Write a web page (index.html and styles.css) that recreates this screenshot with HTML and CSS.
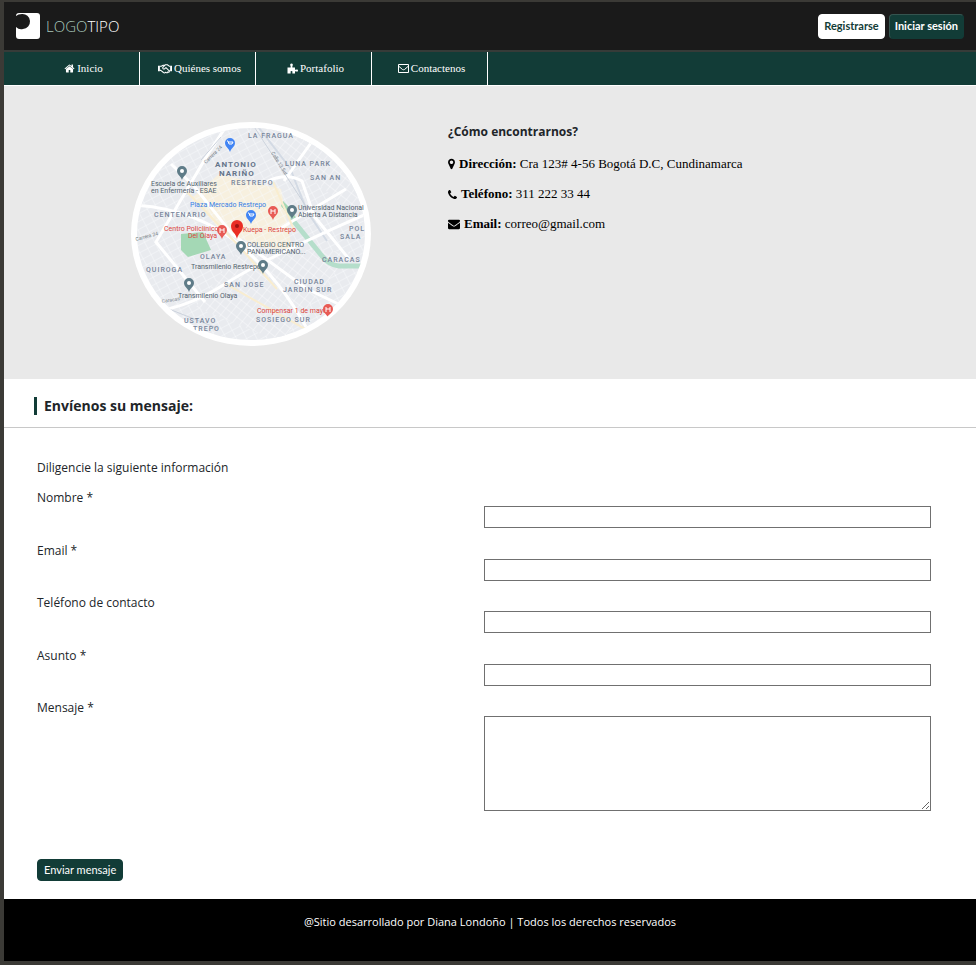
FILE: index.html
```html
<!DOCTYPE html>
<html lang="es">
<head>
<meta charset="utf-8">
<meta name="viewport" content="width=device-width, initial-scale=1">
<title>Contáctenos</title>
<link rel="stylesheet" href="styles.css">
</head>
<body>
<header class="topbar">
  <a class="brand" href="#">
    <svg class="brand-mark" viewBox="0 0 24 26" aria-hidden="true"><rect width="24" height="26" rx="3" fill="#fff"/><path fill="#1a1a1a" d="M0 3Q2 1 6 1A7 7 0 0 1 7 16Q3 17 0 14Z"/></svg>
    <span class="brand-name"><span class="brand-soft">LOGO</span>TIPO</span>
  </a>
  <div class="account">
    <button class="btn btn-light" type="button">Registrarse</button>
    <button class="btn btn-bold" type="button">Iniciar sesión</button>
  </div>
</header>
<nav class="menu">
  <a href="#"><svg class="icon" viewBox="0 0 1792 1792" aria-hidden="true"><path d="M1472 992v480q0 26-19 45t-45 19h-384v-384h-256v384h-384q-26 0-45-19t-19-45v-480q0-1 .5-3t.5-3l575-474 575 474q1 2 1 6zm223-69l-62 74q-8 9-21 11h-3q-13 0-21-7l-692-577-692 577q-12 8-24 7-13-2-21-11l-62-74q-8-10-7-23.500t11-21.500l719-599q32-26 76-26t76 26l244 204v-195q0-14 9-23t23-9h192q14 0 23 9t9 23v408l219 182q10 8 11 21.500t-7 23.500z"/></svg>Inicio</a>
  <a href="#"><svg class="icon icon-wide" viewBox="0 0 30 22" aria-hidden="true"><path d="M0 5h4v12H0zM26 5h4v12h-4z"/><path fill="none" stroke="currentColor" stroke-width="2.200" stroke-linejoin="round" d="M4 6h3l4-2h4l-5 5q0 4 4 3l3-3 7 7q1 3-2 3l-1-1q0 3-3 2l-2-1q-2 3-5 0l-5-4H4M13 5l3-2h4l4 3h2M24 16h2"/></svg>Quiénes somos</a>
  <a href="#"><svg class="icon" viewBox="0 0 22 22" aria-hidden="true"><path d="M1 9h6q1-1 0-3-2-5 2-5t2 5q-1 2 0 3h5v4q1 1 3 0 3-1 3 2t-3 2q-2-1-3 0v4h-5q-1-1 0-3 0-2-2-2t-2 2q1 2 0 3H1z"/></svg>Portafolio</a>
  <a href="#"><svg class="icon" viewBox="0 0 22 22" aria-hidden="true"><path fill="none" stroke="currentColor" stroke-width="2" stroke-linejoin="round" d="M1 3h20v16H1zM1 6l8 7q2 1 4 0l8-7"/></svg>Contactenos</a>
</nav>
<main>
  <section class="contact">
    <div class="map-cell">
      <svg class="map" viewBox="0 0 240 224" role="img" aria-label="Mapa de ubicación">
        <defs>
          <clipPath id="oval"><ellipse cx="120" cy="112" rx="117" ry="109"/></clipPath>
          <clipPath id="land"><ellipse cx="120" cy="112" rx="114" ry="106"/></clipPath>
          <pattern id="blocks" width="9" height="7" patternUnits="userSpaceOnUse" patternTransform="rotate(-28)"><path d="M0 0H9M0 0V7" stroke="#f8f9fb" stroke-width="1" fill="none"/></pattern>
          <pattern id="blocks-b" width="7" height="8" patternUnits="userSpaceOnUse" patternTransform="rotate(38)"><path d="M0 0H7M0 0V8" stroke="#f9fafb" stroke-width="1" fill="none"/></pattern>
          <g id="pin"><path d="M0 7C-1 3-5 2-5-2a5 5 0 0 1 10 0C5 2 1 3 0 7Z"/><circle cy="-2" r="2" fill="#fff"/></g>
          <g id="hospital"><path d="M0 7C-1 3-5 2-5-2a5 5 0 0 1 10 0C5 2 1 3 0 7Z"/><path d="M-2-4V1M2-4V1M-2-2H2" stroke="#fff" stroke-width="1" fill="none"/></g>
          <g id="shop"><path d="M0 7C-1 3-5 2-5-2a5 5 0 0 1 10 0C5 2 1 3 0 7Z"/><path d="M-3-4h1l1 3h3l1-2h-4" stroke="#fff" stroke-width="1" fill="none"/></g>
        </defs>
        <ellipse cx="120" cy="112" rx="120" ry="112" fill="#fff"/>
        <g clip-path="url(#land)">
          <rect width="240" height="224" fill="#e9ebef"/>
          <path d="M88 52l62 15 12 65-31-7-43-18-26-32z" fill="#f7f0df"/>
          <rect width="240" height="224" fill="url(#blocks)"/>
          <path d="M110 0L240 105V0zM110 125l110 5-70 90-85-35z" fill="#e9ebef"/>
          <path d="M110 0L240 105V0zM110 125l110 5-70 90-85-35z" fill="url(#blocks-b)"/>
          <path d="M50 112l22-2 8 18-23 7-7-7zM152 79l6 6 8 12-6-1-10-12z" fill="#a4d8b5"/>
          <path d="M160 96l31 38q7 9 17 10h32" stroke="#b5decb" stroke-width="5" fill="none"/>
          <path d="M125 2l34 44 17 43 20 30" stroke="#d3dae4" stroke-width="2" fill="none"/>
          <g fill="none" stroke="#fff" stroke-width="3"><path d="M0 83q65 3 110 41t75 100M98 0L77 32 25 120 74 180M10 190q40 0 84-28t146-72M135 60q20-10 36-1l12 35 35 43M40 42l23 22 38 48 75 55 42 20M182 18l-29 41M215 67l-70 42"/></g>
          <g fill="none" stroke="#f9edcf" stroke-width="2"><path d="M56 70l50 52 40 45M142 60l22 50M95 162l95 54"/></g>
          <g fill="none" stroke="#cbd2dc" stroke-width="1"><path d="M120 0l56 86M20 180l66 26M90 15L70 38"/></g>
        </g>
        <g clip-path="url(#oval)">
          <g class="map-area">
            <text x="117" y="16">LA FRAGUA</text><text x="154" y="44">LUNA PARK</text><text x="179" y="58">SAN AN</text>
            <text x="100" y="63">RESTREPO</text><text x="23" y="95">CENTENARIO</text><text x="69" y="137">OLAYA</text>
            <text x="15" y="150">QUIROGA</text><text x="93" y="165">SAN JOSE</text><text x="163" y="162">CIUDAD</text>
            <text x="152" y="170">JARDIN SUR</text><text x="125" y="200">SOSIEGO SUR</text><text x="191" y="140">CARACAS</text>
            <text x="218" y="109">POL</text><text x="209" y="117">SALA</text><text x="53" y="201">USTAVO</text><text x="62" y="209">TREPO</text>
          </g>
          <g class="map-district"><text x="84" y="45">ANTONIO</text><text x="88" y="54">NARIÑO</text></g>
          <g class="map-place">
            <text x="20" y="64">Escuela de Auxiliares</text><text x="20" y="71">en Enfermería - ESAE</text>
            <text x="167" y="88">Universidad Nacional</text><text x="167" y="95">Abierta A Distancia</text>
            <text x="116" y="125">COLEGIO CENTRO</text><text x="116" y="132">PANAMERICANO...</text>
            <text x="60" y="147">Transmilenio Restrepo</text><text x="47" y="176">Transmilenio Olaya</text>
          </g>
          <g class="map-blue"><text x="59" y="85">Plaza Mercado Restrepo</text></g>
          <g class="map-red"><text x="33" y="109">Centro Policlínico</text><text x="57" y="116">Del Olaya</text><text x="112" y="110">Kuepa - Restrepo</text><text x="126" y="191">Compensar 1 de mayo</text></g>
          <g class="map-road"><text transform="translate(75 42) rotate(-45)">Carrera 24</text><text transform="translate(140 31) rotate(58)">Calle 13 Sur</text><text transform="translate(5 119) rotate(-15)">Carrera 24</text><text transform="translate(31 181) rotate(-9)">Caracas</text></g>
          <g fill="#5f7c88"><use href="#pin" x="51" y="51"/><use href="#pin" x="161" y="90"/><use href="#pin" x="110" y="126"/><use href="#pin" x="132" y="145"/><use href="#pin" x="58" y="163"/></g>
          <g fill="#4285f4"><use href="#shop" x="99" y="23"/><use href="#shop" x="120" y="95"/></g>
          <g fill="#e85b55"><use href="#hospital" x="142" y="91"/><use href="#hospital" x="91" y="110"/><use href="#hospital" x="197" y="189"/></g>
          <path d="M106 117c-1-6-6-7-6-13a6 6 0 0 1 12 0c0 6-5 7-6 13z" fill="#ea2e25"/><circle cx="106" cy="104" r="2" fill="#9e1411"/>
        </g>
      </svg>
    </div>
    <address class="details">
      <h2>¿Cómo encontrarnos?</h2>
      <p><svg class="icon icon-pin" viewBox="384 0 1024 1792" aria-hidden="true"><path d="M1152 640q0-106-75-181t-181-75-181 75-75 181 75 181 181 75 181-75 75-181zm256 0q0 109-33 179l-364 774q-16 33-47.500 52t-67.500 19-67.500-19-46.500-52l-365-774q-33-70-33-179 0-212 150-362t362-150 362 150 150 362z"/></svg><span><b>Dirección:</b> Cra 123# 4-56 Bogotá D.C, Cundinamarca</span></p>
      <p><svg class="icon icon-phone" viewBox="192 128 1408 1408" aria-hidden="true"><path d="M1600 1240q0 27-10 70.500t-21 68.500q-21 50-122 106-94 51-186 51-27 0-53-3.500t-57.500-12.500-47-14.500-55.500-20.500-49-18q-98-35-175-83-127-79-264-216t-216-264q-48-77-83-175-3-9-18-49t-20.500-55.500-14.500-47-12.500-57.500-3.500-53q0-92 51-186 56-101 106-122 25-11 68.500-21t70.500-10q14 0 21 3 18 6 53 76 11 19 30 54t35 63.500 31 53.500q3 4 17.500 25t21.500 35.500 7 28.500q0 20-28.500 50t-62 55-62 53-28.500 46q0 9 5 22.500t8.500 20.500 14 24 11.500 19q76 137 174 235t235 174q2 1 19 11.500t24 14 20.500 8.500 22.500 5q18 0 46-28.500t53-62 55-62 50-28.500q14 0 28.500 7t35.500 21.500 25 17.500q25 15 53.500 31t63.500 35 54 30q70 35 76 53 3 7 3 21z"/></svg><span><b>Teléfono:</b> 311 222 33 44</span></p>
      <p><svg class="icon icon-mail" viewBox="0 0 1792 1792" aria-hidden="true"><path d="M1792 710v794q0 66-47 113t-113 47h-1472q-66 0-113-47t-47-113v-794q44 49 101 87 362 246 497 345 57 42 92.500 65.500t94.500 48 110 24.500h2q51 0 110-24.500t94.500-48 92.500-65.500q170-123 498-345 57-39 100-87zm0-294q0 79-49 151t-122 123q-376 261-468 325-10 7-42.500 31t-54 38.500-52 32.500-57.500 27-50 9h-2q-23 0-50-9t-57.500-27-52-32.500-54-38.500-42.500-31q-91-64-262-182.500t-205-142.500q-62-42-117-115.500t-55-136.500q0-78 41.500-130t118.500-52h1472q65 0 112.500 47t47.500 113z"/></svg><span><b>Email:</b> correo@gmail.com</span></p>
    </address>
  </section>
  <div class="section-head"><h1>Envíenos su mensaje:</h1></div>
  <form class="message">
    <p class="intro">Diligencie la siguiente información</p>
    <div class="fields">
      <div class="field"><label for="nombre">Nombre *</label><input id="nombre" type="text"></div>
      <div class="field"><label for="email">Email *</label><input id="email" type="email"></div>
      <div class="field"><label for="telefono">Teléfono de contacto</label><input id="telefono" type="tel"></div>
      <div class="field"><label for="asunto">Asunto *</label><input id="asunto" type="text"></div>
    </div>
    <div class="field"><label for="mensaje">Mensaje *</label><textarea id="mensaje"></textarea></div>
    <button class="btn btn-send" type="button">Enviar mensaje</button>
  </form>
</main>
<footer class="foot">@Sitio desarrollado por Diana Londoño | Todos los derechos reservados</footer>
</body>
</html>
```
FILE: styles.css
```css
* { box-sizing: border-box; }
html { background: #3b3a36; }
body {
  margin: 0;
  padding: 2px 0 4px 4px;
  font: 12px/20px "Open Sans", "Noto Sans", sans-serif;
  color: #212529;
}
h1, h2, p { margin: 0; }
a { color: inherit; text-decoration: none; }

.topbar {
  display: flex;
  align-items: center;
  justify-content: space-between;
  height: 50px;
  padding: 0 12px;
  background: #1a1a1a;
  border-bottom: 2px solid #363b38;
}
.brand { display: flex; align-items: center; gap: 6px; color: #fff; }
.brand-mark { width: 24px; height: 26px; }
.brand-name { font-size: 15px; font-weight: 300; }
.brand-soft { color: #a9c8bb; }
.account { display: flex; gap: 4px; }

.btn {
  height: 25px;
  padding: 0 5px;
  border: 1px solid #123c37;
  border-radius: 4px;
  background: #123c37;
  color: #fff;
  font: 11px/20px Lato, "Open Sans", sans-serif;
}
.btn-light { background: #fff; border-color: #fff; color: #123c37; font-weight: 700; }
.btn-bold { border-color: #35544f #123c37 #123c37 #35544f; font-weight: 700; }

.menu {
  display: flex;
  padding-left: 20px;
  background: #123c37;
  border-bottom: 1px solid #fff;
  color: #fff;
  font: 11px/33px "Liberation Serif", serif;
}
.menu a {
  display: flex;
  align-items: center;
  justify-content: center;
  gap: 2px;
  width: 116px;
  padding-left: 4px;
  border-right: 1px solid #fff;
}
.icon { flex: none; width: 11px; height: 11px; fill: currentColor; }
.icon-wide { width: 14px; }

.contact {
  display: grid;
  grid-template-columns: 444px 1fr;
  padding: 36px 0 33px;
  background: #e9e9e9;
}
.map-cell { display: flex; justify-content: center; padding-left: 50px; }
.map { display: block; width: 240px; height: 224px; }
.map text { font-family: Roboto, sans-serif; }
.map-area, .map-district { letter-spacing: 1px; }
.map-area { font-size: 7px; font-weight: 500; fill: #77859a; }
.map-district { font-size: 8px; font-weight: 700; fill: #66758a; }
.map-place { font-size: 7px; fill: #53636e; }
.map-blue { font-size: 7px; fill: #377fe5; }
.map-red { font-size: 7px; fill: #db443c; }
.map-road { font-size: 5px; fill: #777f86; }

.details {
  display: flex;
  flex-direction: column;
  gap: 10px;
  color: #000;
  font: 13px/20px "Liberation Serif", serif;
}
.details h2 { margin-bottom: 2px; color: #212529; font: 700 12px/20px "Open Sans", "Noto Sans", sans-serif; }
.details p { display: flex; align-items: center; gap: 4px; }
.icon-pin { width: 7px; height: 12px; }
.icon-phone { width: 9px; height: 9px; }
.icon-mail { width: 12px; height: 12px; }

.section-head { padding: 18px 30px 12px; background: #fff; border-bottom: 1px solid #c8c8c8; }
.section-head h1 {
  padding-left: 7px;
  border-left: 3px solid #123c37;
  font-size: 14px;
  line-height: 18px;
  font-weight: 700;
}

.message { padding: 30px 45px 18px 33px; background: #fff; }
.intro { margin-bottom: 10px; }
.fields { display: grid; grid-auto-rows: 1fr; min-height: 210px; }
.field { display: grid; grid-template-columns: 1fr 1fr; align-items: start; }
.field input, .field textarea {
  width: 100%;
  height: 22px;
  margin: 18px 0 0;
  padding: 2px;
  border: 1px solid #707070;
  border-radius: 0;
  background: #fff;
  font: inherit;
}
.field textarea { display: block; height: 95px; }
.btn-send { display: block; height: 22px; margin-top: 48px; padding: 0 6px; line-height: 18px; }

.foot {
  padding: 13px 0 29px;
  background: #000;
  color: #fff;
  font-size: 11px;
  text-align: center;
}
```
